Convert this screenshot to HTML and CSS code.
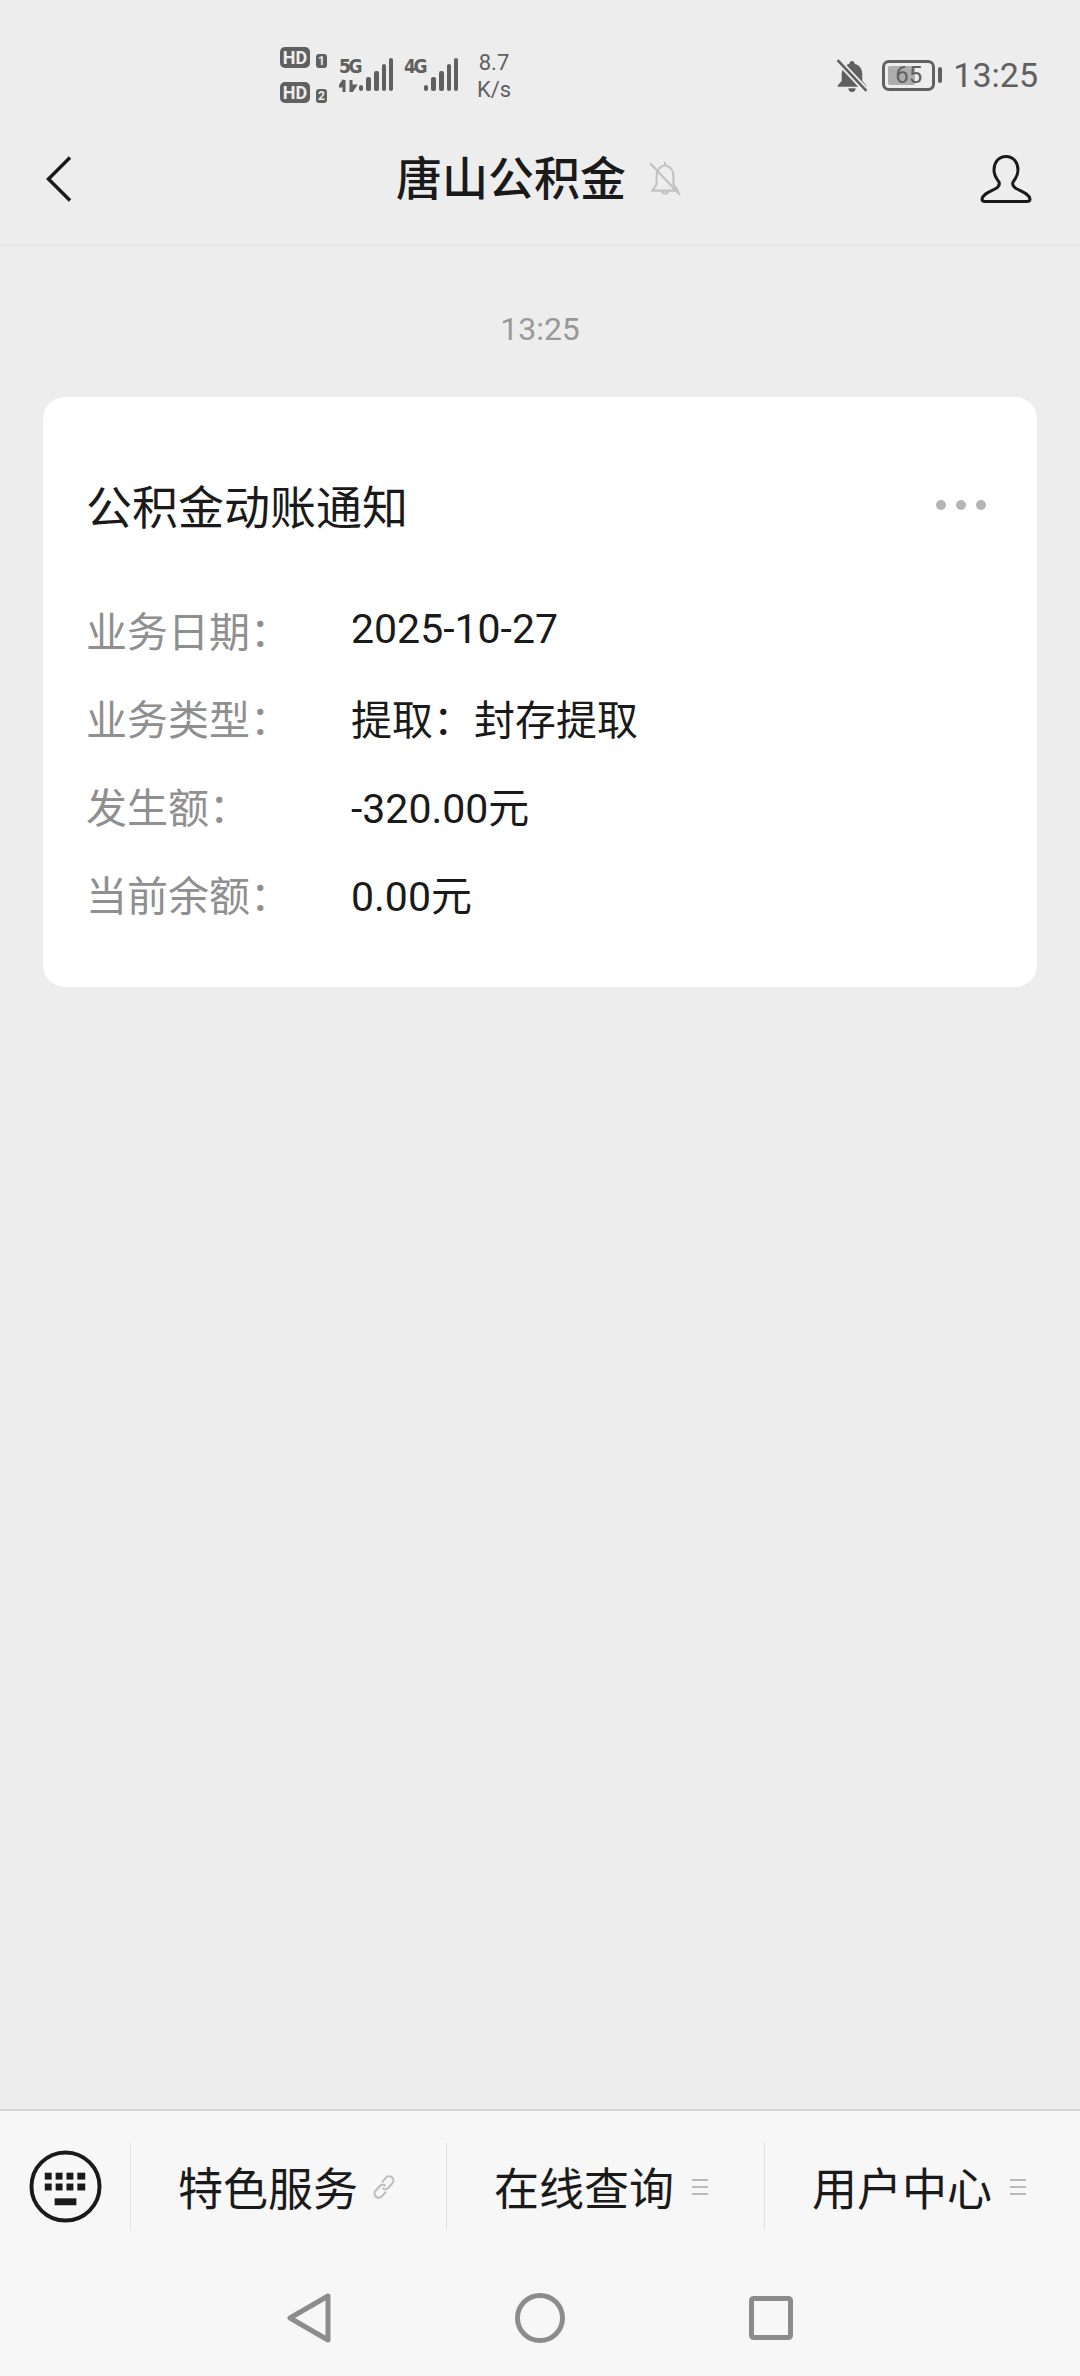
FILE: index.html
```html
<!DOCTYPE html>
<html lang="zh-CN">
<head>
    <meta charset="UTF-8">
    <title>唐山公积金</title>
    <link rel="stylesheet" href="styles.css">
</head>
<body>
    <div class="phone">
        <!-- 状态栏 -->
        <div class="status-bar">
            <div class="status-left">
                <div class="hd-list">
                    <div class="hd-row"><span class="hd">HD</span><span class="sim">1</span></div>
                    <div class="hd-row"><span class="hd">HD</span><span class="sim">2</span></div>
                </div>
                <div class="signal">
                    <div class="net-col">
                        <span class="net">5G</span>
                        <svg width="19" height="13" viewBox="0 0 19 13">
                            <path d="M5 1v12M5 1L1 7h4M12 13V1M12 13l4-6h-4" fill="none" stroke="#606060" stroke-width="3"/>
                        </svg>
                    </div>
                    <svg width="34" height="34" viewBox="19 0 34 34">
                        <g fill="#606060">
                            <rect x="19" y="27" width="4" height="6" rx="2"/>
                            <rect x="26" y="19" width="5" height="14" rx="2"/>
                            <rect x="34" y="13" width="5" height="20" rx="2"/>
                            <rect x="42" y="6" width="4" height="27" rx="2"/>
                            <rect x="49" y="0" width="4" height="33" rx="2"/>
                        </g>
                    </svg>
                </div>
                <div class="signal signal-2">
                    <div class="net-col">
                        <span class="net">4G</span>
                    </div>
                    <svg width="34" height="34" viewBox="19 0 34 34">
                        <g fill="#606060">
                            <rect x="19" y="27" width="4" height="6" rx="2"/>
                            <rect x="26" y="19" width="5" height="14" rx="2"/>
                            <rect x="34" y="13" width="5" height="20" rx="2"/>
                            <rect x="42" y="6" width="4" height="27" rx="2"/>
                            <rect x="49" y="0" width="4" height="33" rx="2"/>
                        </g>
                    </svg>
                </div>
                <div class="speed"><span>8.7</span><span>K/s</span></div>
            </div>
            <div class="status-right">
                <svg width="34" height="35" viewBox="0 0 32 34">
                    <path d="M16 3c-1.500 0-2.500 1-2.500 2.500C8 7 6 11 6 16v6l-4 5v1h28v-1l-4-5v-6c0-5-2-9-7.500-10.500C18.500 4 17.500 3 16 3zM12.500 29.500a3.500 3.500 0 0 0 7 0z" fill="#606060"/>
                    <path d="M1 1l29 31" stroke="#ededed" stroke-width="6"/>
                    <path d="M2 2l28 30" stroke="#606060" stroke-width="2.500"/>
                </svg>
                <div class="battery">
                    <div class="battery-body"><div class="battery-fill" style="width: 65%"></div><span class="battery-num">65</span></div>
                    <div class="battery-nub"></div>
                </div>
                <span class="clock">13:25</span>
            </div>
        </div>

        <!-- 标题栏 -->
        <div class="header">
            <svg class="back" width="26" height="46" viewBox="0 0 26 46">
                <path d="M24 1.500L2.500 23 24 44.500" fill="none" stroke="#1a1a1a" stroke-width="3.500"/>
            </svg>
            <div class="title-wrap">
                <span class="title">唐山公积金</span>
                <svg class="mute" width="36" height="38" viewBox="0 0 34 36">
                    <path d="M17 2v3c-5 1-8 5-8 11v7l-4 6h24l-4-6v-7c0-6-3-10-8-11M14 29a3 3 0 0 0 6 0M3 3l28 30" fill="none" stroke="#c2c2c2" stroke-width="2"/>
                </svg>
            </div>
            <svg class="person" width="52" height="48" viewBox="0 0 52 48">
                <path d="M26 1.500C18 1.500 14 8 14 15C14 21 17 24 19 27C20 30 19 32 15 34C9 37 3 39 2 44Q2 46.500 5 46.500H47Q50 46.500 50 44C49 39 43 37 37 34C33 32 32 30 33 27C35 24 38 21 38 15C38 8 34 1.500 26 1.500Z" fill="none" stroke="#1a1a1a" stroke-width="3"/>
            </svg>
        </div>

        <!-- 消息区 -->
        <div class="chat">
            <div class="time">13:25</div>
            <div class="card">
                <div class="card-head">
                    <span class="card-title">公积金动账通知</span>
                    <div class="dots"><i></i><i></i><i></i></div>
                </div>
                <div class="row"><span class="label">业务日期：</span><span class="value">2025-10-27</span></div>
                <div class="row"><span class="label">业务类型：</span><span class="value">提取：封存提取</span></div>
                <div class="row"><span class="label">发生额：</span><span class="value">-320.00元</span></div>
                <div class="row"><span class="label">当前余额：</span><span class="value">0.00元</span></div>
            </div>
        </div>

        <!-- 底部菜单 -->
        <div class="footer">
            <div class="tabs">
                <div class="keyboard">
                    <svg width="73" height="73" viewBox="0 0 74 74">
                        <circle cx="37" cy="37" r="34.500" fill="none" stroke="#1a1a1a" stroke-width="4"/>
                        <g fill="#1a1a1a">
                            <rect x="16" y="23" width="7" height="7"/>
                            <rect x="27" y="23" width="7" height="7"/>
                            <rect x="38" y="23" width="7" height="7"/>
                            <rect x="49" y="23" width="8" height="7"/>
                            <rect x="16" y="34" width="7" height="7"/>
                            <rect x="27" y="34" width="7" height="7"/>
                            <rect x="38" y="34" width="7" height="7"/>
                            <rect x="49" y="34" width="8" height="7"/>
                            <rect x="26" y="49" width="22" height="7"/>
                        </g>
                    </svg>
                </div>
                <div class="tab">
                    <span class="tab-name">特色服务</span>
                    <svg class="tab-icon" width="26" height="26" viewBox="0 0 24 25">
                        <g fill="none" stroke="#bdbdbd" stroke-width="2">
                            <path d="M10 8l4-4.500a4 4 0 0 1 6 5.500l-4 4.500a4 4 0 0 1-5.500 0"/>
                            <path d="M14 17l-4 4.500a4 4 0 0 1-6-5.500l4-4.500a4 4 0 0 1 5.500 0"/>
                        </g>
                    </svg>
                </div>
                <div class="tab">
                    <span class="tab-name">在线查询</span>
                    <div class="menu-icon"><i></i><i></i><i></i></div>
                </div>
                <div class="tab">
                    <span class="tab-name">用户中心</span>
                    <div class="menu-icon"><i></i><i></i><i></i></div>
                </div>
            </div>
            <div class="nav">
                <svg width="44" height="50" viewBox="0 0 44 50">
                    <path d="M41 3L3 25l38 22z" fill="none" stroke="#8c8c8c" stroke-width="5" stroke-linejoin="round"/>
                </svg>
                <svg width="50" height="50" viewBox="0 0 50 50">
                    <circle cx="25" cy="25" r="22.500" fill="none" stroke="#8c8c8c" stroke-width="5"/>
                </svg>
                <svg width="44" height="50" viewBox="0 0 44 50">
                    <rect x="2.500" y="5.500" width="39" height="39" rx="2" fill="none" stroke="#8c8c8c" stroke-width="5"/>
                </svg>
            </div>
        </div>
    </div>
</body>
</html>
```

FILE: styles.css
```css
* {
    box-sizing: border-box;
}
body {
    margin: 0;
    font-family: Roboto, "Noto Sans CJK SC", sans-serif;
    background-color: #ededed;
    color: #1a1a1a;
}
.phone {
    width: 1080px;
    height: 2376px;
    display: flex;
    flex-direction: column;
    overflow: hidden;
}

/* 状态栏 */
.status-bar {
    height: 115px;
    padding: 47px 42px 0 280px;
    display: flex;
    justify-content: space-between;
    align-items: flex-start;
    color: #606060;
}
.status-left {
    display: flex;
}
.hd-list {
    display: flex;
    flex-direction: column;
    gap: 14px;
}
.hd-row {
    display: flex;
    align-items: flex-end;
    gap: 6px;
    height: 21px;
}
.hd {
    width: 30px;
    height: 21px;
    border-radius: 5px;
    background-color: #606060;
    color: #ededed;
    font-size: 18px;
    font-weight: 700;
    line-height: 21px;
    text-align: center;
}
.sim {
    width: 11px;
    height: 14px;
    border-radius: 3px;
    background-color: #606060;
    color: #ededed;
    font-size: 12px;
    font-weight: 700;
    line-height: 14px;
    text-align: center;
}
.signal {
    width: 54px;
    margin: 11px 0 0 12px;
    display: flex;
    justify-content: space-between;
}
.signal-2 {
    margin-left: 11px;
}
.net-col {
    width: 19px;
    display: flex;
    flex-direction: column;
    gap: 5px;
}
.net {
    height: 16px;
    font-family: "DejaVu Sans Condensed", "DejaVu Sans", sans-serif;
    font-size: 19px;
    font-weight: 700;
    line-height: 16px;
    letter-spacing: -2.5px;
}
.speed {
    width: 54px;
    margin: 2px 0 0 9px;
    display: flex;
    flex-direction: column;
    align-items: center;
    font-size: 22px;
    line-height: 27px;
}
.status-right {
    display: flex;
    align-items: center;
    height: 56px;
}
.battery {
    display: flex;
    align-items: center;
    gap: 3px;
    margin-left: 13px;
}
.battery-body {
    position: relative;
    width: 53px;
    height: 31px;
    border: 3px solid #606060;
    border-radius: 7px;
    padding: 3px;
}
.battery-fill {
    height: 100%;
    background-color: #adadad;
    border-radius: 2px;
}
.battery-num {
    position: absolute;
    left: 0;
    right: 0;
    top: -1px;
    text-align: center;
    font-size: 24px;
    line-height: 27px;
}
.battery-nub {
    width: 4px;
    height: 16px;
    border-radius: 2px;
    background-color: #606060;
}
.clock {
    margin-left: 11px;
    font-size: 34px;
}

/* 标题栏 */
.header {
    height: 131px;
    padding: 0 48px 2px 46px;
    border-bottom: 2px solid #e8e8e8;
    display: flex;
    justify-content: space-between;
    align-items: center;
}
.title-wrap {
    display: flex;
    align-items: center;
    gap: 21px;
    margin-left: 324px;
    margin-right: auto;
}
.title {
    font-size: 46px;
    font-weight: 500;
    line-height: 60px;
}

/* 消息区 */
.chat {
    flex: 1;
    padding: 63px 43px 0;
}
.time {
    font-size: 32px;
    line-height: 40px;
    color: #999;
    text-align: center;
}
.card {
    margin-top: 48px;
    height: 590px;
    padding: 81px 45px 48px 43px;
    background-color: #fff;
    border-radius: 22px;
}
.card-head {
    display: flex;
    justify-content: space-between;
    align-items: center;
    margin-bottom: 47px;
}
.card-title {
    font-size: 46px;
    line-height: 60px;
}
.dots {
    display: flex;
    gap: 10px;
    margin: 0 6px 6px 0;
}
.dots i {
    width: 10px;
    height: 10px;
    border-radius: 50%;
    background-color: #b5b5b5;
}
.row {
    height: 88px;
    display: flex;
    align-items: center;
    font-size: 41px;
}
.label {
    width: 265px;
    color: #8f8f8f;
}

/* 底部菜单 */
.footer {
    height: 267px;
    background-color: #f7f7f7;
    border-top: 2px solid #d6d6d6;
}
.tabs {
    height: 87px;
    margin-top: 32px;
    display: grid;
    grid-template-columns: 130px 316px 318px 316px;
}
.keyboard {
    display: flex;
    align-items: center;
    padding-left: 29px;
}
.tab {
    padding-left: 47px;
    border-left: 1px solid #e0e0e0;
    display: flex;
    align-items: center;
}
.tab-name {
    font-size: 45px;
}
.tab-icon {
    margin-left: 13px;
}
.menu-icon {
    width: 16px;
    margin-left: 18px;
    display: flex;
    flex-direction: column;
    gap: 5px;
}
.menu-icon i {
    height: 2px;
    background-color: #b9b9b9;
}
.nav {
    padding: 63px 0 0 287px;
    display: flex;
    gap: 184px;
}
```
